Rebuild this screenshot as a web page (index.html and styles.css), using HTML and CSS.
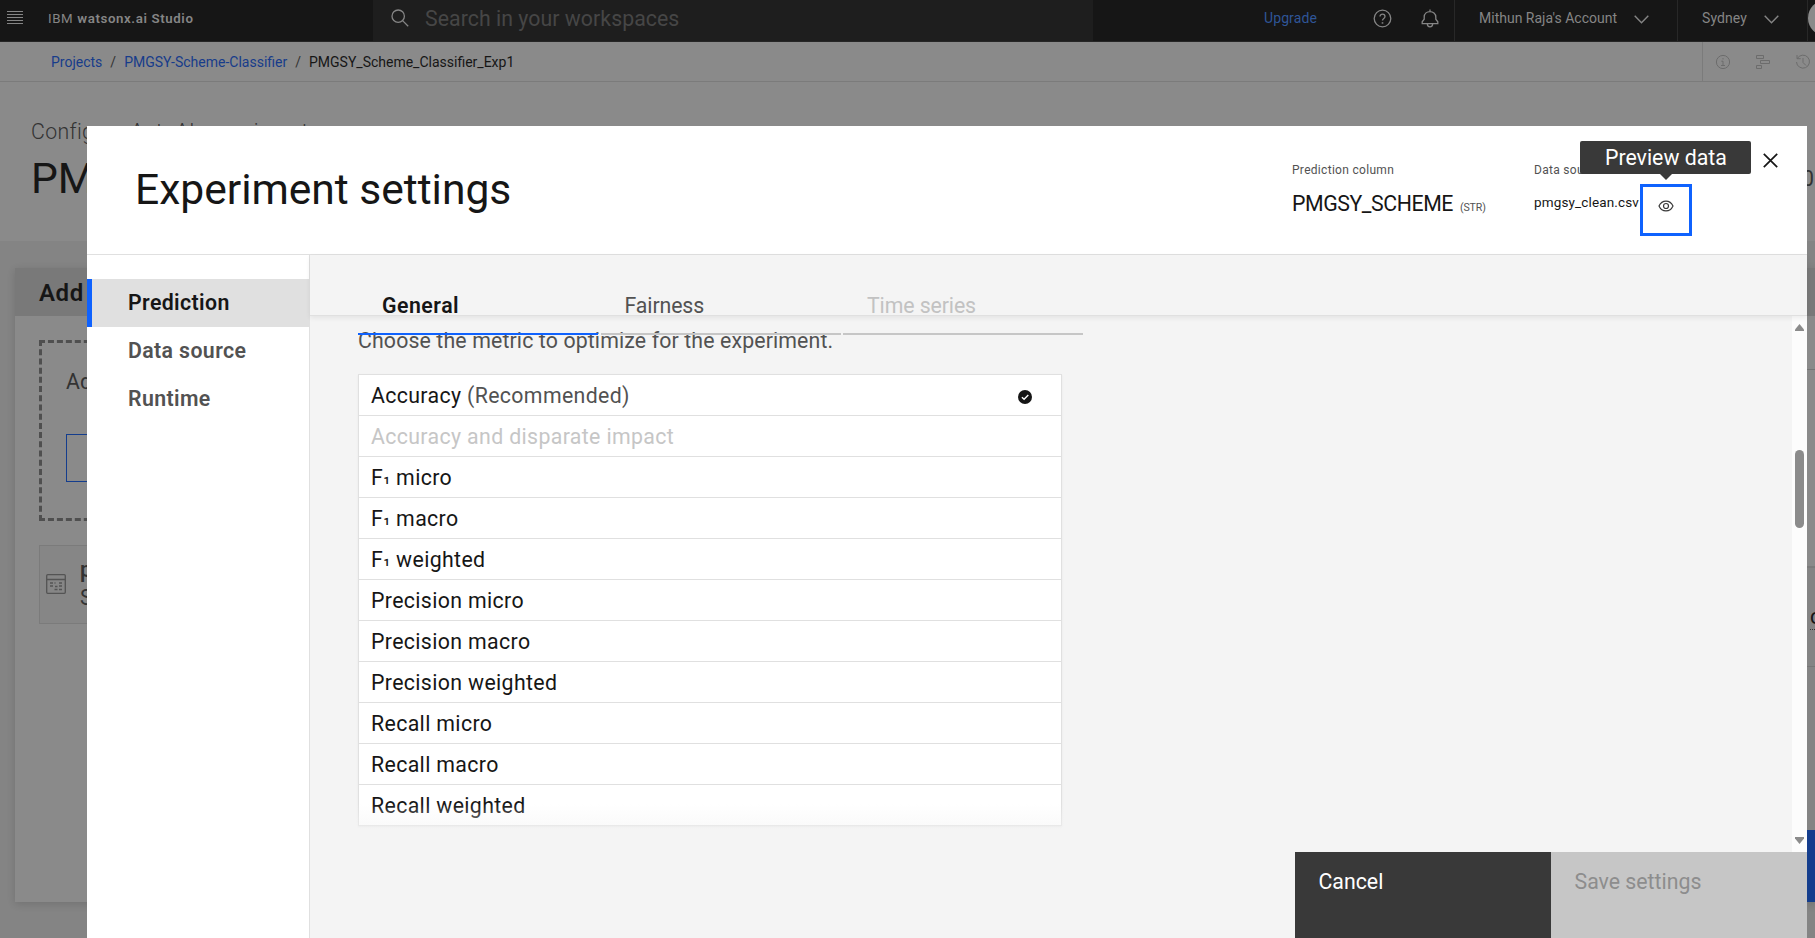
FILE: index.html
```html
<!DOCTYPE html>
<html lang="en">
<head>
<meta charset="utf-8">
<title>IBM watsonx.ai Studio</title>
<link rel="stylesheet" href="styles.css">
</head>
<body>
<div class="page">
  <header class="topbar">
    <svg class="menu" width="16" height="13" viewBox="0 0 16 13"><path d="M0 .5h16M0 3.5h16M0 6.5h16M0 9.5h16M0 12.500h16" stroke="#858585" stroke-width="1"/></svg>
    <div class="brand">IBM <b>watsonx.ai Studio</b></div>
    <div class="search">
      <svg width="18" height="18" viewBox="0 0 18 18" fill="none" stroke="#858585" stroke-width="1.3"><circle cx="7.2" cy="7.2" r="6.2"/><path d="M11.6 11.6l5.6 5.6"/></svg>
      <span>Search in your workspaces</span>
    </div>
    <a class="upgrade">Upgrade</a>
    <svg class="help" width="19" height="19" viewBox="0 0 19 19" fill="none" stroke="#858585" stroke-width="1.3"><circle cx="9.5" cy="9.5" r="8.3"/><path d="M7 7.6c0-3.2 5-3.2 5 0 0 2-2.5 1.8-2.5 4"/><path d="M9.5 13.2v1.5" stroke-width="1.6"/></svg>
    <svg class="bell" width="18" height="19" viewBox="0 0 18 19" fill="none" stroke="#858585" stroke-width="1.3"><path d="M9 .5v2M1.2 14.6v-1.800l2-2.600V8C3.200 .7 14.800 .7 14.800 8v2.200l2 2.600v1.800zM6.300 14.800c0 4 5.400 4 5.400 0"/></svg>
    <div class="account"><span>Mithun Raja's Account</span>
      <svg width="15" height="9" viewBox="0 0 15 9" fill="none" stroke="#858585" stroke-width="1.4"><path d="M.7.8l6.800 7 6.800-7"/></svg></div>
    <div class="region"><span>Sydney</span>
      <svg width="15" height="9" viewBox="0 0 15 9" fill="none" stroke="#858585" stroke-width="1.4"><path d="M.7.8l6.800 7 6.800-7"/></svg></div>
    <div class="avatar-cell"><div class="avatar"></div></div>
  </header>
  <div class="crumbbar">
    <nav class="crumbs"><a>Projects</a><i>/</i><a>PMGSY-Scheme-Classifier</a><i>/</i><span>PMGSY_Scheme_Classifier_Exp1</span></nav>
    <div class="tools">
      <svg width="16" height="16" viewBox="0 0 16 16" fill="none" stroke="#6c6c6c"><circle cx="8" cy="8" r="6.600"/><path d="M6.300 7.200H8v4M6 11.500h4M8 4v1.500"/></svg>
      <svg width="16" height="16" viewBox="0 0 16 16" fill="none" stroke="#6c6c6c"><path d="M1.500 1.500h7v3h-7zM5.500 6.500h9v3h-9zM1.500 11.500h5v3h-5z"/></svg>
      <svg width="16" height="16" viewBox="0 0 16 16" fill="none" stroke="#6c6c6c"><path d="M2.300 4.500A6.500 6.500 0 1 1 1.500 8M2 1v3.700h3.700M8 4v4.500l3 3"/></svg>
    </div>
  </div>
  <div class="hero">
    <div class="hero-kicker">Configure AutoAI experiment</div>
    <div class="hero-title">PMGSY_Scheme_Classifier_Exp1</div>
    <div class="hero-side">0</div>
  </div>
  <div class="work">
    <section class="source">
      <h2>Add data source</h2>
      <div class="drop"><p>Add a data source</p><div class="browse"></div></div>
      <div class="file">
        <svg width="20" height="20" viewBox="0 0 20 20" fill="none" stroke="#545454" stroke-width="1.300"><rect x=".7" y=".7" width="18.600" height="18.600" rx="1"/><path d="M.7 5.500h18.600M4 9h3M13 9h3M8.500 9h1M4 12h3M9 12.500h2.500M13 12h3M8.500 15.500h3M13 15.500h3"/></svg>
        <div><b>pmgsy_clean.csv</b><span>Size: 1 MB</span></div>
      </div>
    </section>
    <section class="config">
      <div class="config-head"></div>
      <div class="config-row"></div>
      <div class="config-body"></div>
      <div class="config-type"><span>c</span></div>
      <div class="config-run"></div>
      <div class="run"></div>
    </section>
  </div>
</div>

<div class="modal">
  <header class="modal-head">
    <h1>Experiment settings</h1>
    <div class="meta meta-col">
      <label>Prediction column</label>
      <div class="col-name">PMGSY_SCHEME <small>(STR)</small></div>
    </div>
    <div class="meta meta-src">
      <label>Data source</label>
      <div class="src-name">pmgsy_clean.csv</div>
    </div>
    <div class="preview">
      <svg width="16" height="12" viewBox="0 0 16 12" fill="none" stroke="#393939" stroke-width="1.200"><path d="M1 6C4-.6 12-.6 15 6 12 12.600 4 12.600 1 6z"/><circle cx="8" cy="6" r="2.500"/></svg>
      <span class="tooltip">Preview data</span>
    </div>
    <svg class="close" width="15" height="15" viewBox="0 0 15 15" fill="none" stroke="#161616" stroke-width="1.700"><path d="M.8.8l13.400 13.400M14.200.8L.8 14.200"/></svg>
  </header>
  <div class="modal-body">
    <nav class="side">
      <a class="on">Prediction</a>
      <a>Data source</a>
      <a>Runtime</a>
    </nav>
    <main class="main">
      <div class="tabs-strip">
        <div class="tabs">
          <div class="tab tab-on">General</div>
          <div class="tab">Fairness</div>
          <div class="tab tab-off">Time series</div>
        </div>
      </div>
      <div class="scroll">
        <div class="content">
          <p class="lead">Choose the metric to optimize for the experiment.</p>
          <ul class="list">
            <li><span>Accuracy <em>(Recommended)</em></span>
              <svg width="14" height="14" viewBox="0 0 14 14"><circle cx="7" cy="7" r="7" fill="#161616"/><path d="M3.900 7.200l2.200 2.100 4.200-4.200" fill="none" stroke="#fff" stroke-width="1.400"/></svg></li>
            <li class="off">Accuracy and disparate impact</li>
            <li><span>F<i>₁</i> micro</span></li>
            <li><span>F<i>₁</i> macro</span></li>
            <li><span>F<i>₁</i> weighted</span></li>
            <li>Precision micro</li>
            <li>Precision macro</li>
            <li>Precision weighted</li>
            <li>Recall micro</li>
            <li>Recall macro</li>
            <li>Recall weighted</li>
          </ul>
        </div>
        <div class="fade"></div>
        <div class="bar">
          <svg width="9" height="7" viewBox="0 0 9 7"><path d="M4.500 0L9 5.500V7H0V5.500z" fill="#8b8b8b"/></svg>
          <div class="thumb"></div>
          <svg width="9" height="7" viewBox="0 0 9 7"><path d="M4.500 7L9 1.500V0H0v1.500z" fill="#8b8b8b"/></svg>
        </div>
      </div>
      <footer class="actions">
        <button class="cancel">Cancel</button>
        <button class="save">Save settings</button>
      </footer>
    </main>
  </div>
</div>
</body>
</html>
```
FILE: styles.css
```css
* { box-sizing: border-box; }
html, body { height: 100%; }
body {
  margin: 0;
  overflow: hidden;
  position: relative;
  font-family: Roboto, "Open Sans", sans-serif;
  font-size: 21.3px;
  color: #161616;
  background: #848484;
}
h1, h2, p, ul { margin: 0; padding: 0; }
svg { display: block; flex: none; }
button { font: inherit; border: 0; padding: 0; text-align: left; border-radius: 0; }

/* Page behind the dialog */
.page { width: 1815px; height: 938px; overflow: hidden; }
.topbar {
  height: 42px;
  display: flex;
  align-items: center;
  padding: 0 0 5px 7px;
  overflow: hidden;
  background: #161616;
  border-bottom: 1px solid #262626;
  font-size: 14px;
  color: #858585;
}
.topbar > * { flex: none; }
.menu { margin-top: -1px; }
.brand { width: 325px; margin-left: 25px; font-size: 13.300px; letter-spacing: .6px; white-space: nowrap; }
.brand b { font-weight: 600; }
.search {
  width: 720px;
  height: 42px;
  margin-bottom: -6px;
  padding: 0 0 6px 18px;
  display: flex;
  align-items: center;
  gap: 16px;
  background: #1e1e1e;
  font-size: 21.3px;
  letter-spacing: .04px;
  color: #464646;
}
.upgrade { width: 280px; padding-left: 171px; color: #2f5597; letter-spacing: .1px; }
.bell { margin-left: 29px; }
.account, .region, .avatar-cell {
  height: 41px;
  margin-bottom: -5px;
  padding: 0 0 5px 24px;
  display: flex;
  align-items: center;
  gap: 17px;
  border-left: 1px solid #282828;
  white-space: nowrap;
}
.account { width: 223px; margin-left: 15px; }
.region { width: 130px; letter-spacing: .1px; }
.account svg, .region svg { margin-top: 3px; }
.avatar-cell { padding-left: 0; }
.avatar { width: 36px; height: 36px; border-radius: 50%; background: #8a8a8a; }

.crumbbar {
  height: 40px;
  display: flex;
  justify-content: space-between;
  background: #8a8a8a;
  border-bottom: 1px solid #7b7b7b;
}
.crumbs { padding-left: 51px; font-size: 14px; line-height: 40px; }
.crumbs a { color: #173c8b; }
.crumbs i { font-style: normal; padding: 0 8px; color: #333; }
.tools {
  flex: none;
  width: 113px;
  padding-left: 12px;
  display: flex;
  align-items: center;
  gap: 24px;
  border-left: 1px solid #7b7b7b;
}
.hero { height: 159px; padding: 37px 0 0 31px; background: #8a8a8a; position: relative; }
.hero-kicker { font-weight: 300; line-height: 26px; color: #333; letter-spacing: .35px; }
.hero-title { font-size: 42.600px; line-height: 50px; margin-top: 8px; white-space: nowrap; }
.hero-side { position: absolute; left: 1802px; top: 84px; line-height: 26px; color: #333; }

.work { height: 697px; padding-top: 27px; display: flex; justify-content: space-between; background: #848484; }
.source {
  width: 560px;
  height: 634px;
  margin-left: 15px;
  background: #8a8a8a;
  box-shadow: 0 2px 8px rgba(0, 0, 0, .14);
}
.source h2 { height: 48px; padding-left: 24px; font-size: 24px; font-weight: 600; line-height: 51px; letter-spacing: .6px; background: #797979; }
.drop {
  width: 400px;
  height: 181px;
  margin: 24px 0 0 24px;
  padding: 26px 0 0 24px;
  border: 3px dashed #4f4f4f;
  color: #333;
}
.drop p { line-height: 26px; }
.browse { width: 200px; height: 48px; margin-top: 39px; border: 1px solid #143d8d; }
.file {
  width: 400px;
  height: 79px;
  margin: 24px 0 0 24px;
  padding: 0 0 1px 6px;
  display: flex;
  align-items: center;
  gap: 14px;
  background: #868686;
  border: 1px solid #7b7b7b;
  color: #333;
}
.file b, .file span { display: block; line-height: 28px; letter-spacing: .3px; }
.file b { font-weight: 600; }
.config { width: 8px; height: 634px; overflow: hidden; box-shadow: 0 2px 8px rgba(0, 0, 0, .2); background: #848484; }
.config-head { height: 48px; background: #797979; }
.config-row { height: 54px; background: #8a8a8a; border-bottom: 1px solid #747474; }
.config-body { height: 198px; background: #8a8a8a; border-bottom: 2px solid #7b7b7b; }
.config-type { height: 99px; padding: 38px 0 0 3px; border-bottom: 1px solid #767676; white-space: nowrap; line-height: 22px; }
.config-type span { border-bottom: 1px dotted #333; }
.config-run { height: 163px; }
.run { height: 72px; background: #143d8d; }

/* Dialog */
.modal {
  position: absolute;
  left: 87px;
  top: 126px;
  width: 1720px;
  height: 812px;
  display: flex;
  flex-direction: column;
  background: #fff;
}
.modal-head { flex: none; height: 129px; display: flex; border-bottom: 1px solid #e0e0e0; }
.modal-head > * { flex: none; }
.modal-head h1 {
  width: 1156px;
  padding: 35px 0 0 48px;
  font-size: 42.600px;
  font-weight: 400;
  line-height: 56px;
  letter-spacing: -.03px;
}
.meta { padding-top: 36px; white-space: nowrap; }
.meta-col { width: 242px; margin-left: 49px; }
.meta label { display: block; font-size: 12px; line-height: 16px; letter-spacing: .3px; color: #525252; }
.col-name { margin-top: 12px; line-height: 28px; letter-spacing: -.42px; }
.col-name small { font-size: 10.600px; letter-spacing: -.1px; margin-left: 2px; color: #525252; }
.meta-src { width: 106px; }
.src-name { margin-top: 14px; font-size: 13.500px; line-height: 20px; letter-spacing: .14px; }
.preview {
  position: relative;
  width: 52px;
  height: 52px;
  margin-top: 58px;
  padding: 13px 0 0 15px;
  background: #fff;
  border: 3px solid #0f62fe;
}
.tooltip {
  position: absolute;
  left: -63px;
  top: -46px;
  width: 171px;
  height: 33px;
  padding-left: 25px;
  line-height: 33px;
  border-radius: 2px;
  background: #393939;
  color: #fff;
  white-space: nowrap;
}
.tooltip::after {
  content: "";
  position: absolute;
  left: 80px;
  top: 33px;
  border: 6px solid transparent;
  border-top-color: #393939;
  border-bottom: 0;
}
.close { margin: 27px 0 0 71px; }

.modal-body { flex: 1; display: flex; min-height: 0; }
.side { width: 223px; padding-top: 24px; border-right: 1px solid #e0e0e0; }
.side a {
  display: block;
  height: 48px;
  padding-left: 41px;
  line-height: 47px;
  font-weight: 600;
  letter-spacing: .38px;
  color: #525252;
}
.side .on { padding-left: 36px; border-left: 5px solid #0f62fe; background: #e0e0e0; color: #161616; }
.main { flex: 1; display: flex; flex-direction: column; background: #f4f4f4; }
.tabs-strip {
  position: relative;
  z-index: 1;
  flex: none;
  height: 61px;
  padding-left: 48px;
  border-bottom: 1px solid #e0e0e0;
  box-shadow: 0 2px 5px rgba(0, 0, 0, .07);
}
.tabs { height: 80px; display: flex; gap: 2.500px; }
.tab {
  width: 240px;
  padding: 38px 0 0 24px;
  line-height: 26px;
  border-bottom: 2px solid #c6c6c6;
  letter-spacing: -.1px;
  color: #525252;
}
.tab-on { border-bottom-color: #0f62fe; font-weight: 600; letter-spacing: .5px; color: #161616; }
.tab-off { color: #c2c2c2; }
.scroll { position: relative; height: 536px; display: flex; justify-content: space-between; }
.content { padding: 12px 0 0 48px; }
.lead { line-height: 26px; letter-spacing: .13px; color: #525252; }
.list { width: 704px; margin-top: 20px; list-style: none; background: #fff; border: 1px solid #e0e0e0; box-shadow: 0 1px 2px rgba(0, 0, 0, .06); }
.list li {
  height: 41px;
  padding: 1px 29px 0 12px;
  display: flex;
  align-items: center;
  justify-content: space-between;
  border-bottom: 1px solid #e0e0e0;
  letter-spacing: .36px;
}
.list li:last-child { height: 40px; border-bottom: 0; }
.list svg { margin-top: 3px; }
.list em { font-style: normal; color: #525252; }
.list i { font-style: normal; font-size: 19px; line-height: 0; vertical-align: 4px; }
.list .off { color: #c6c6c6; }
.fade {
  position: absolute;
  left: 0;
  right: 15px;
  bottom: 0;
  height: 48px;
  background: linear-gradient(rgba(244, 244, 244, 0), #f4f4f4);
}
.bar {
  width: 15px;
  height: 536px;
  padding: 8px 0 8px;
  display: flex;
  flex-direction: column;
  align-items: center;
  justify-content: space-between;
  background: #fcfcfc;
}
.thumb { width: 9px; height: 78px; margin-bottom: 190px; border-radius: 5px; background: #8b8b8b; }
.actions { display: flex; justify-content: flex-end; height: 86px; }
.actions button { width: 256px; height: 86px; padding: 17px 24px 0 23.500px; line-height: 26px; display: flex; }
.actions .cancel { background: #393939; color: #fff; }
.actions .save { background: #c6c6c6; color: #8d8d8d; }
```
